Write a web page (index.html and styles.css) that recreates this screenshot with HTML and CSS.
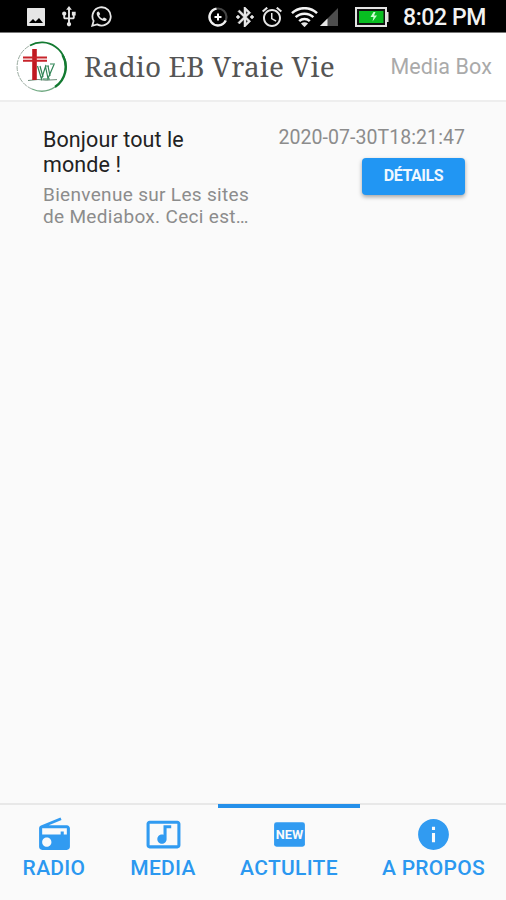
FILE: index.html
```
<!DOCTYPE html>
<html lang="fr">
<head>
    <meta charset="UTF-8">
    <meta name="viewport" content="width=device-width, initial-scale=1.0">
    <title>Radio EB Vraie Vie</title>
    <link rel="stylesheet" href="styles.css">
</head>
<body>
    <div class="status-bar">
        <div class="status-left">
            <svg class="s-photo" viewBox="3 3 18 18"><path d="M21 20V4c0-.6-.4-1-1-1H4c-.6 0-1 .4-1 1v16c0 .6.4 1 1 1h16c.6 0 1-.4 1-1zM9 14l2.500 2.500L15 13l4 5H5l4-4z"/></svg>
            <svg class="s-usb" viewBox="5 1 14 22"><path d="M15 7v4h1v2h-3V5h2l-3-4-3 4h2v8H8v-2.070c.7-.37 1.200-1.080 1.200-1.930 0-1.210-.99-2.200-2.200-2.200-1.210 0-2.200.99-2.200 2.200 0 .85.5 1.560 1.200 1.930V13c0 1.110.89 2 2 2h3v3.050c-.71.37-1.200 1.100-1.200 1.950 0 1.220.99 2.200 2.200 2.200 1.210 0 2.200-.98 2.200-2.200 0-.85-.49-1.580-1.200-1.950V15h3c1.110 0 2-.89 2-2v-2h1V7h-4z"/></svg>
            <svg class="s-whatsapp" viewBox="0 0 20 20"><path d="M1.200 18.800l1.300-4.600A8.700 8.700 0 1 1 5.800 17.500z" fill="none" stroke="#e6e6e6" stroke-width="1.700"/><path d="M7.100 5.200c-.5-.2-1.700.7-1.700 2 0 3 4.200 7.200 7.400 7.200 1.300 0 2.200-1 2.200-2 0-.4-2.300-1.600-2.700-1.500-.5.100-.9 1.200-1.300 1.200-.8 0-3.100-2.100-3.200-3 0-.4.900-.9.900-1.400 0-.5-.9-2.300-1.600-2.500z"/></svg>
        </div>
        <div class="status-right">
            <svg class="s-data" viewBox="0 0 20 20"><g fill="none"><circle cx="10" cy="10" r="8.500" stroke="#444" stroke-width="2.200"/><path d="M8.500 1.600a8.500 8.500 0 1 0 9.200 12" stroke="#f0f0f0" stroke-width="2.400"/><path d="M10 6.500v7M6.500 10h7" stroke="#fff" stroke-width="2"/></g></svg>
            <svg class="s-bt" viewBox="3 2 18 20"><path d="M7 12l-2-2-2 2 2 2 2-2zm10.710-4.290L12 2h-1v7.590L6.410 5 5 6.410 10.590 12 5 17.590 6.410 19 11 14.410V22h1l5.710-5.710-4.300-4.290 4.300-4.290zM13 5.830l1.880 1.880L13 9.590V5.830zm1.880 10.460L13 18.170v-3.760l1.880 1.880zM19 10l-2 2 2 2 2-2-2-2z" stroke="#e6e6e6" stroke-width=".5"/></svg>
            <svg class="s-alarm" viewBox="2 2 20 20"><path d="M22 5.720l-4.600-3.860-1.290 1.530 4.600 3.860L22 5.720zM7.880 3.390L6.600 1.860 2 5.710l1.290 1.530 4.590-3.850zM12.500 8H11v6l4.750 2.850.75-1.230-4-2.370V8zM12 4c-4.970 0-9 4.030-9 9s4.020 9 9 9c4.970 0 9-4.030 9-9s-4.030-9-9-9zm0 16c-3.870 0-7-3.130-7-7s3.130-7 7-7 7 3.130 7 7-3.130 7-7 7z"/></svg>
            <svg class="s-wifi" viewBox="0 0 28 20"><g fill="none" stroke="#f4f4f4" stroke-width="2.600"><path d="M1 6a19 19 0 0 1 26 0"/><path d="M4.800 10.200a13.500 13.500 0 0 1 18.400 0"/><path d="M8.500 14.200a8 8 0 0 1 11 0"/></g><path d="M10.300 16.700q3.700-2.600 7.400 0L14 20.500z"/></svg>
            <svg class="s-signal" viewBox="0 0 18 18"><path d="M18 0v18H0z" fill="#4d4d4d"/><path d="M7.500 10.500V18H0z"/></svg>
            <svg class="s-battery" viewBox="0 0 34 20"><path d="M0 0h32v5h1.500v10H32v5H0z" fill="#e3e3e3"/><path d="M2 2h28v16H2z" fill="#111"/><path d="M4 4h24.500v12H4z" fill="#08bd21"/><path d="M18.500 5l-3 5h3l-1 4.500 4.500-6h-3l1.500-3.500z" fill="#c9ffd0"/></svg>
            <span class="clock">8:02 PM</span>
        </div>
    </div>

    <header class="navbar">
        <svg class="logo" viewBox="0 0 52 52">
            <g fill="none">
                <path d="M14 4.500A24 24 0 0 1 49.500 29" stroke="#137a31" stroke-width="1.800"/>
                <path d="M46.500 14A24 24 0 0 1 39 46" stroke="#137a31" stroke-width="2.400"/>
                <path d="M39 46A24 24 0 0 1 16 48" stroke="#70a982" stroke-width="1.300"/>
                <path d="M16 48A24 24 0 0 1 14 4.500" stroke="#9aaba0" stroke-width="1" stroke-dasharray="5 1"/>
                <path d="M12 39.500l10-1 8 .7 11-.6" stroke="#6b8b78" stroke-width="1"/>
            </g>
            <path d="M16.200 8h4.600v31h-4.600z" fill="#c01820"/>
            <path d="M7 15.500h24v2H7zM7 18.800h24v2H7z" fill="#c8242b"/>
            <g fill="none" stroke="#2f8455" stroke-width="1.200">
                <path d="M21.500 25l4 13 4-12.500 2.500 12 6-14"/>
                <path d="M24 25l3 11M32 25l2 10M34 23h5M27 38h7M29 25h4"/>
            </g>
        </svg>
        <h1 class="brand">Radio EB Vraie Vie</h1>
        <span class="subtitle">Media Box</span>
    </header>

    <main class="content">
        <article class="post">
            <div class="post-text">
                <h2 class="post-title">Bonjour tout le monde !</h2>
                <p class="post-excerpt">Bienvenue sur Les sites<br>de Mediabox. Ceci est…</p>
            </div>
            <div class="post-side">
                <time class="post-date">2020-07-30T18:21:47</time>
                <button class="details-btn">DÉTAILS</button>
            </div>
        </article>
    </main>

    <nav class="tabbar">
        <a class="tab tab-radio">
            <svg class="tab-icon" viewBox="0 0 24 24"><path d="M3.240 6.150C2.510 6.430 2 7.170 2 8v12c0 1.100.89 2 2 2h16c1.110 0 2-.9 2-2V8c0-1.110-.89-2-2-2H8.300l8.260-3.340L15.880 1 3.240 6.150zM7 20c-1.660 0-3-1.340-3-3s1.340-3 3-3 3 1.340 3 3-1.340 3-3 3zm13-8h-2v-2h-2v2H4V8h16v4z"/></svg>
            <span class="tab-label">RADIO</span>
        </a>
        <a class="tab tab-media">
            <svg class="tab-icon" viewBox="0 0 24 24"><path d="M21 3H3c-1.110 0-2 .89-2 2v14c0 1.100.89 2 2 2h18c1.100 0 2-.9 2-2V5c0-1.110-.9-2-2-2zm0 16H3V5h18v14zM8 15c0-1.660 1.340-3 3-3 .35 0 .69.070 1 .18V6h5v2h-3v7.030c-.02 1.640-1.350 2.970-3 2.970-1.660 0-3-1.340-3-3z"/></svg>
            <span class="tab-label">MEDIA</span>
        </a>
        <a class="tab tab-news active">
            <svg class="tab-icon" viewBox="0 0 24 24"><rect x="2" y="4" width="20" height="16" rx="1.600"/><text class="new-text" x="12" y="15" text-anchor="middle" textLength="17.800" lengthAdjust="spacingAndGlyphs">NEW</text></svg>
            <span class="tab-label">ACTULITE</span>
        </a>
        <a class="tab tab-about">
            <svg class="tab-icon" viewBox="0 0 24 24"><path d="M12 2C6.480 2 2 6.480 2 12s4.480 10 10 10 10-4.480 10-10S17.520 2 12 2zm1 15h-2v-6h2v6zm0-8h-2V7h2v2z"/></svg>
            <span class="tab-label">A PROPOS</span>
        </a>
    </nav>
</body>
</html>
```

FILE: styles.css
```
* { box-sizing: border-box; }
body { margin: 0; height: 900px; display: flex; flex-direction: column; overflow: hidden; background: #fafafa; font-family: Roboto, sans-serif; }
h1, h2, p { margin: 0; font-weight: 400; }
svg { display: block; flex: none; }

.status-bar { height: 33px; flex: none; display: flex; justify-content: space-between; align-items: center; padding: 1px 20px 0 27px; background: #000; border-bottom: 1px solid #777; }
.status-bar svg { fill: #e6e6e6; }
.status-left, .status-right { display: flex; align-items: center; }
.s-photo { width: 18px; height: 18px; }
.s-usb { width: 14px; height: 21px; margin-left: 17px; }
.s-whatsapp { width: 21px; height: 21px; margin-left: 15px; }
.s-data { width: 20px; height: 20px; }
.s-bt { width: 18px; height: 20px; margin-left: 8px; }
.s-alarm { width: 20px; height: 20px; margin-left: 8px; }
.s-wifi { width: 27px; height: 20px; margin-left: 9px; }
.s-signal { width: 18px; height: 18px; margin-left: 2px; }
.s-battery { width: 34px; height: 20px; margin-left: 17px; }
.clock { margin-left: 14px; padding-top: 3px; color: #f2f2f2; font-size: 23px; line-height: 28px; font-weight: 500; letter-spacing: -.4px; white-space: nowrap; }

.navbar { height: 69px; flex: none; display: flex; align-items: center; padding: 0 14px 0 16px; background: #fff; border-bottom: 2px solid #eee; }
.logo { width: 52px; height: 52px; }
.brand { margin-left: 16px; padding-bottom: 2px; color: #555; font-family: "Noto Serif", "DejaVu Serif Condensed", "DejaVu Serif", serif; font-size: 28px; letter-spacing: .15px; white-space: nowrap; }
.subtitle { margin-left: auto; padding-bottom: 1px; color: #aaa; font-size: 21.500px; letter-spacing: .1px; white-space: nowrap; }

.content { flex: 1; padding: 25px 41px 0 43px; }
.post { display: flex; justify-content: space-between; }
.post-text { width: 215px; }
.post-title { width: 180px; color: #222; font-size: 21.500px; line-height: 25px; letter-spacing: .1px; }
.post-excerpt { margin-top: 7px; color: #8c8c8c; font-size: 19px; line-height: 22px; letter-spacing: .32px; white-space: nowrap; }
.post-side { display: flex; flex-direction: column; align-items: flex-end; }
.post-date { color: #8c8c8c; font-size: 19.500px; line-height: 22px; letter-spacing: .07px; white-space: nowrap; }
.details-btn { width: 103px; height: 37px; margin-top: 9px; padding: 0 0 2px; border: none; border-radius: 4px; background: #2196f3; color: #eef7ff; font: 700 16px Roboto, sans-serif; letter-spacing: -.45px; box-shadow: 0 2px 4px rgba(0,0,0,.35); }

.tabbar { height: 97px; flex: none; display: flex; border-top: 2px solid #e8e8e8; background: #fafafa; }
.tab { position: relative; display: flex; flex-direction: column; align-items: center; padding-top: 11px; color: #2b98f0; }
.tab-radio { width: 108px; }
.tab-media { width: 110px; }
.tab-news { width: 142px; }
.tab-about { width: 147px; flex: none; }
.tab.active::before { content: ""; position: absolute; left: 0; right: 0; top: -1px; height: 4px; background: #2590ea; }
.tab-icon { width: 37px; height: 37px; fill: #319bf1; }
.new-text { fill: #fafafa; font-family: Roboto, sans-serif; font-size: 8.400px; font-weight: 700; }
.tab-label { margin-top: 3px; font-size: 21px; line-height: 25px; font-weight: 500; letter-spacing: .3px; white-space: nowrap; }
.tab-radio, .tab-media, .tab-news { flex: none; }
```
